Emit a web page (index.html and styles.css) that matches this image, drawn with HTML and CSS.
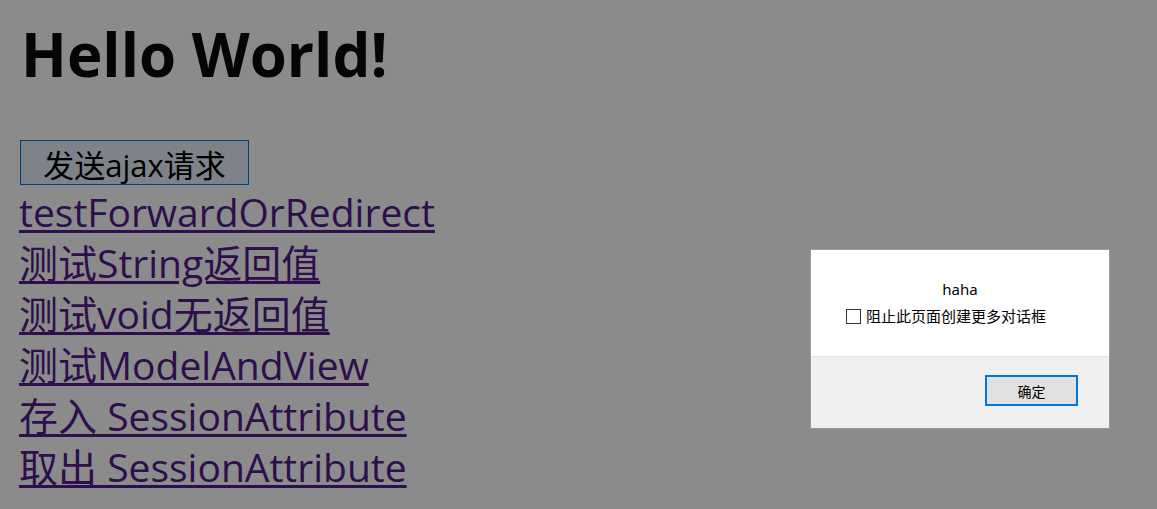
FILE: index.html
```html
<!DOCTYPE html>
<html lang="zh-CN">
<head>
<meta charset="utf-8">
<title>Hello World</title>
<link rel="stylesheet" href="styles.css">
</head>
<body>
<main class="page">
  <h1 class="title">Hello World!</h1>
  <button class="ajax-btn" type="button">发送ajax请求</button>
  <nav class="links">
    <a class="link" href="#">testForwardOrRedirect</a>
    <a class="link" href="#">测试String返回值</a>
    <a class="link" href="#">测试void无返回值</a>
    <a class="link" href="#">测试ModelAndView</a>
    <a class="link" href="#">存入 SessionAttribute</a>
    <a class="link" href="#">取出 SessionAttribute</a>
  </nav>
</main>
<div class="overlay"></div>
<div class="dialog">
  <div class="dialog-body">
    <div class="dialog-msg">haha</div>
    <label class="dialog-check"><span class="box"></span><span>阻止此页面创建更多对话框</span></label>
  </div>
  <div class="dialog-foot">
    <button class="ok-btn" type="button">确定</button>
  </div>
</div>
</body>
</html>
```

FILE: styles.css
```css
html, body {
  margin: 0;
  padding: 0;
  background: #ffffff;
  height: 100%;
  overflow: hidden;
}
body {
  font-family: "Open Sans", "Noto Sans CJK SC", sans-serif;
}
.page {
  display: flex;
  flex-direction: column;
  align-items: flex-start;
  padding: 0 0 0 19px;
}
.title {
  margin: 14px 0 0 2px;
  font-size: 60px;
  line-height: 80px;
  font-weight: 700;
  color: #0a0a0a;
}
.ajax-btn {
  margin: 46px 0 0 1px;
  width: 229px;
  height: 45px;
  padding: 0;
  font-family: "Open Sans", "Noto Sans CJK SC", sans-serif;
  font-size: 31px;
  color: #000;
  background: #e5f1fb;
  border: 1px solid #0078d7;
}
.links {
  display: flex;
  flex-direction: column;
  align-items: flex-start;
  margin-top: 1px;
}
.link {
  font-size: 39px;
  line-height: 51px;
  color: #551a8b;
  text-decoration: underline;
  text-underline-offset: 3px;
}
.overlay {
  position: fixed;
  inset: 0;
  background: rgba(0, 0, 0, 0.455);
}
.dialog {
  position: fixed;
  left: 810px;
  top: 249px;
  width: 300px;
  height: 180px;
  box-sizing: border-box;
  border: 1px solid #9a9a9a;
  background: #ffffff;
  display: flex;
  flex-direction: column;
  font-family: "Noto Sans", "Noto Sans CJK SC", sans-serif;
  font-size: 15px;
  color: #000;
}
.dialog-body {
  height: 107px;
  box-sizing: border-box;
  padding: 29px 0 0 35px;
  border-bottom: 1px solid #e3e3e3;
}
.dialog-msg {
  text-align: center;
  margin-left: -35px;
  line-height: 20px;
}
.dialog-check {
  display: flex;
  align-items: center;
  gap: 5px;
  margin-top: 7px;
  line-height: 20px;
}
.box {
  width: 13px;
  height: 13px;
  border: 1px solid #333;
  background: #fff;
}
.dialog-foot {
  flex: 1;
  background: #f0f0f0;
  display: flex;
  justify-content: flex-end;
  align-items: flex-start;
  padding: 18px 31px 0 0;
}
.ok-btn {
  width: 93px;
  height: 31px;
  box-sizing: border-box;
  border: 2px solid #0078d7;
  background: #e1e1e1;
  font-family: "Noto Sans", "Noto Sans CJK SC", sans-serif;
  font-size: 14px;
  color: #000;
  padding: 0;
}
```
